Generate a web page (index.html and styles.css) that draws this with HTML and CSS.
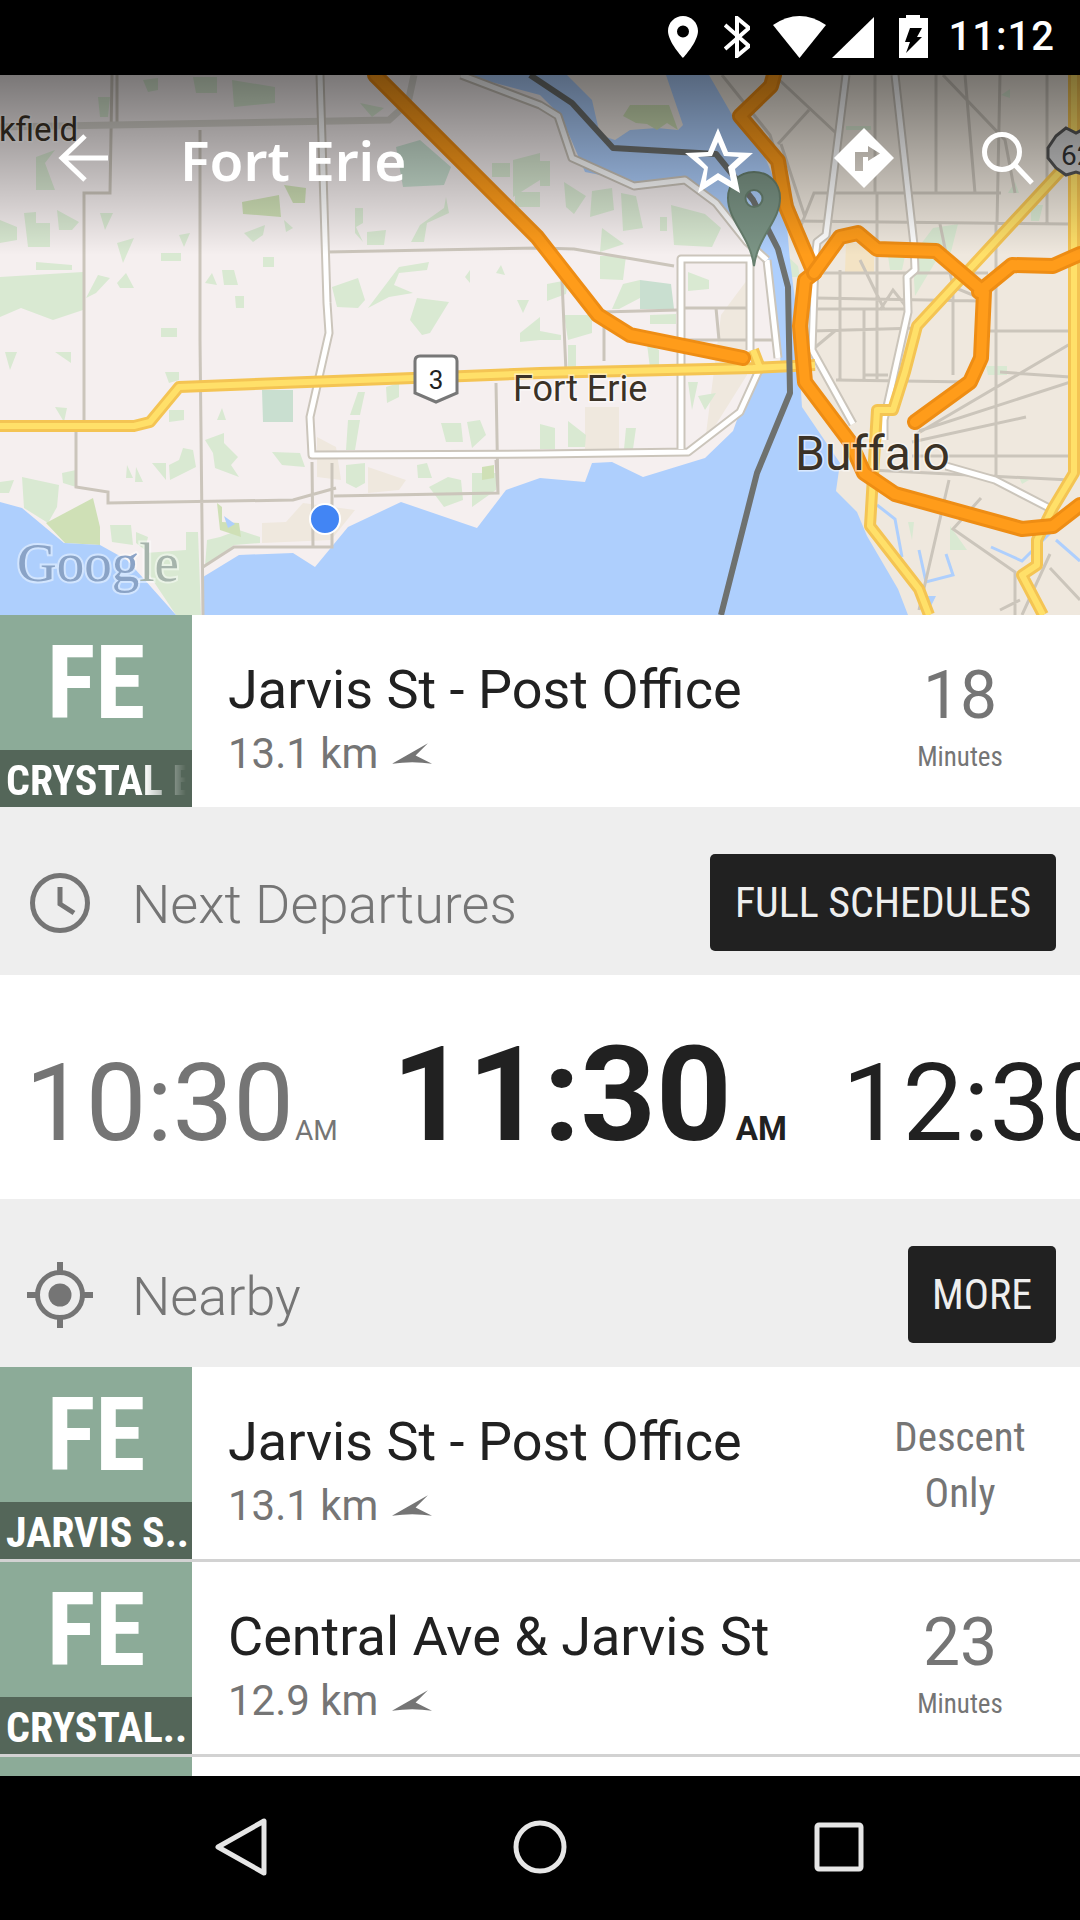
FILE: index.html
```html
<!DOCTYPE html>
<html lang="en">
<head>
<meta charset="utf-8">
<title>Fort Erie</title>
<link rel="stylesheet" href="styles.css">
</head>
<body>
<div class="screen">
  <header class="status">
    <svg class="st-ic ic-pin" viewBox="0 0 30 42"><path class="white" fill-rule="evenodd" d="M15 0C6.7 0 0 6.7 0 15C0 26 15 42 15 42S30 26 30 15C30 6.7 23.3 0 15 0ZM15 9.5a6 6 0 1 1 0 12a6 6 0 1 1 0-12Z"/></svg>
    <svg class="st-ic ic-bt" viewBox="0 0 26 42"><path class="bt" d="M1 9L25 30L13 40V2L25 12L1 33"/></svg>
    <svg class="st-ic ic-wifi" viewBox="0 0 53 42"><path class="white" d="M0 9Q26.5-9 53 9L26.5 42Z"/></svg>
    <svg class="st-ic ic-signal" viewBox="0 0 42 41"><path class="white" d="M0 41L42 0V41Z"/></svg>
    <svg class="st-ic ic-batt" viewBox="0 0 29 43"><path class="white" fill-rule="evenodd" d="M7 0H21V3H29V43H0V3H7ZM11 13L6 27H11L7 38L23 22H18L23 13Z"/></svg>
    <span class="clock-text">11:12</span>
  </header>

  <section class="map">
    <svg class="map-art" viewBox="0 75 1080 540" aria-label="Map of Fort Erie and Buffalo">
      <rect class="land" x="0" y="75" width="1080" height="540"/>
      <path class="beige" d="M709 75H1080V615H780V300Z"/>
      <path class="beige" d="M303 503L355 510L331 540L262 543L262 523L286 522ZM317 437L336 447L341 480L317 477ZM368 467L406 480L399 490L368 493ZM585 407H619V449H585ZM721 315L747 280V375L705 442Z"/>
      <path class="tan" d="M846 242L874 245V272H845Z"/>
      <path class="green" d="M0 220L17 227V240L0 243ZM24 213L36 212V223H50V247H28ZM57 210L79 222L72 230H59ZM0 277L83 272V310L53 320L21 308L0 317ZM36 262L72 265V270H36ZM100 213H113L105 230ZM117 243L134 238L123 263ZM161 253H181V261H161ZM179 235L190 233L184 247ZM244 233L265 225L263 235L253 242ZM263 257H274V267H263ZM284 220L293 228L286 232ZM222 270H234L238 285H224ZM205 283L212 273L217 285ZM235 296H244V308H236ZM161 328H177V337H161ZM117 283L126 273L134 288H120ZM86 298L98 275L110 278L96 293ZM332 287L358 278L365 300L358 308L337 307ZM368 308L399 267L429 262L427 270L399 273L394 285L413 293L389 297ZM410 320L417 298L449 302L430 333L422 335ZM367 232L386 230L384 245H367ZM411 242L420 225L444 208L446 197L449 213L427 223L424 242ZM355 208H363V223L356 227L363 242L355 233ZM143 80L158 78V90L148 92ZM193 77H217V93H196ZM232 80L275 87V103L234 107ZM98 97H110L108 117H100ZM360 103L384 108L372 117ZM36 157L55 150L45 163L55 190H36ZM492 163H510V177H492ZM513 160L540 153V180L513 197ZM515 192H540V207H515ZM517 300H529L523 313ZM520 333L540 317V340L520 342ZM465 277L470 270V283ZM496 273L501 265L505 275Z"/>
      <path class="green" d="M5 352H17L10 370ZM55 352H71V363ZM55 407L67 408L64 422ZM169 410H184V420L169 422ZM165 372H179V380L169 383ZM222 408L226 420H217ZM350 415L358 392H365L360 415ZM386 387L399 383V397L387 403ZM441 423H461L463 442H446ZM467 422L480 420L486 435L472 448ZM348 420H360L355 450H346ZM205 440L224 433V443L238 457L231 465L239 477L215 468L213 453ZM272 452L300 453L305 467L282 465ZM169 465L179 460L183 448L193 450L196 467L170 480ZM152 463H166V480ZM126 478L127 465L133 478ZM136 467L143 482H135ZM62 473L76 470V487L63 483ZM0 482L14 480L9 493H0ZM22 477L59 485L57 507L48 523L24 508ZM110 525H131L133 545L112 542ZM136 532L148 537L145 550L136 543ZM186 532H198L201 615H176L148 573L145 553L186 550ZM207 540L220 537L239 530L260 537V543L234 545L205 567ZM346 465L365 463V483L356 488L346 483ZM417 465L427 463L432 478H418ZM429 487L448 477L461 480L463 500L444 507ZM472 473H496V490L472 507Z"/>
      <path class="green" d="M540 161H550V186H540ZM564 182L586 196L574 214L566 207ZM592 191L612 188L614 210L590 217ZM621 193L636 196L643 228L623 231ZM602 228L624 244L600 252ZM671 205L705 214L721 228L712 247L674 245ZM660 217H667V231H660ZM600 256H626L623 280L600 279ZM612 309L623 284L640 280V298L619 309ZM547 284L568 280L566 294L547 301ZM650 315L676 314V324H650ZM564 315H592V333L568 340ZM540 331L561 335V340H540ZM568 345H576V368H568ZM647 344L659 350V368H650ZM688 272L709 280V289L688 291ZM688 382H698L692 410ZM698 396L716 393L705 410ZM626 428H636L633 449H624ZM568 421L586 435L585 447H568ZM540 424L555 428V449H540ZM915 252L933 228L958 224L951 252L939 256L915 296L914 280ZM783 252L798 266L800 277H788ZM888 256H905L902 270H890ZM846 126H871V130H846ZM986 366H1007V375H988ZM950 526L967 550H950ZM908 522H914L912 540ZM1019 477L1029 480L1022 484ZM1031 205H1043L1039 221H1031ZM1001 95L1010 89V98ZM1008 193L1015 182L1019 193Z"/>
      <path class="green-deep" d="M242 202L279 195L281 217L243 214ZM284 185L306 188L305 203H293ZM46 523L93 498L100 527V545L65 543ZM217 503L222 507V522L239 523L241 537L220 530ZM482 467L494 465V478L482 480Z"/>
      <path class="green-teal" d="M396 147L420 140L451 167L444 185L403 187ZM262 390H293V422H263ZM640 280L671 284L674 309H640Z"/>
      <path class="water" d="M0 502L22 508L64 543L100 545L127 560L176 615H0ZM203 615V577L239 555L293 553L315 567L348 527L401 502L477 528L506 490L540 478L585 482L592 463L612 462L643 477L705 458L733 431L753 375L781 365L774 298L760 252L716 202L685 182L636 182L585 172L561 116L540 95L465 75H709L735 120L762 150L785 205L790 260L795 300L802 407L840 463L836 491L857 512L867 536L898 589L908 615Z"/>
      <path class="land-dark" d="M567 75H666L683 125L678 130L657 128L630 130L615 140L600 135L592 100Z"/>
      <path class="green-deep" d="M623 116L630 105H669L678 130L667 123L657 130L647 124L636 123Z"/>
      <path class="water" d="M919 596H936L929 610ZM224 516L235 524L228 528Z"/>
      <path class="water-line" d="M991 547L1022 561L1050 533M946 554L953 575L926 582L919 550M877 505L895 519L902 557M1056 540L1080 561"/>

      <path class="road" d="M84 422V193H110L112 75M117 75V122M200 130V340L203 615M76 432V487L108 492V503L293 500L336 488M334 496L498 493L496 383M496 460L498 493M312 462L313 547M332 463V547H234L203 567M327 252L540 248L574 249L674 266M562 280L566 372M604 312V361M602 312L678 310M685 308H747M716 308L719 340M685 340H778M850 193H1001M795 221L1070 224M812 273H988M815 298L981 301M815 309H908M812 331L919 328M988 331H1070M864 375H888M836 380L970 382M912 456H1070M1000 372L1070 377M936 75V193M965 75L975 193M875 75V193M1000 75L997 224M1047 75V224M877 193V379M953 287V375M996 224V480M840 270V379M864 309V379M774 75L836 133M809 110L778 144M781 144L805 217M943 75L1005 140L1015 193M919 431L1080 379M915 435L1070 344M912 442L1026 417M812 350L836 330M949 480L919 610M981 498L953 529L1015 572V615M1050 554L1022 615M1050 568L1080 600M870 470L1070 480M800 228L814 193L850 193M722 75L770 135L800 228M940 224L953 287L980 298M884 309L860 260M880 310L893 290L908 309M1000 610L1020 600"/>
      <path class="road-wide" d="M0 127L389 120L408 103L414 75"/>
      <g class="highway">
        <path class="case" d="M320 75L327 303L329 333L310 417L312 455L540 454L688 452L740 412L760 368"/>
        <path class="core" d="M320 75L327 303L329 333L310 417L312 455L540 454L688 452L740 412L760 368"/>
        <path class="case" d="M681 449V259H750V350M767 260L778 358"/>
        <path class="core" d="M681 449V259H750V350M767 260L778 358"/>
        <path class="case" d="M461 75L540 105L558 116L572 158L634 186L685 180L716 203L747 242L767 260"/>
        <path class="core" d="M461 75L540 105L558 116L572 158L634 186L685 180L716 203L747 242L767 260"/>
        <path class="case" d="M846 75L826 235L817 242L815 260L812 350L853 424M895 75L914 245L915 270L907 277L908 312L884 420V440M946 466L995 480L1053 510"/>
        <path class="core" d="M846 75L826 235L817 242L815 260L812 350L853 424M895 75L914 245L915 270L907 277L908 312L884 420V440M946 466L995 480L1053 510"/>
      </g>
      <g class="freeway">
        <path class="case" d="M0 426H134L150 422L179 387L413 378L540 373L753 368L815 365M753 350L760 368"/>
        <path class="core" d="M0 426H134L150 422L179 387L413 378L540 373L753 368L815 365M753 350L760 368"/>
        <path class="case" d="M1080 150L917 326L905 372L893 410H877L870 526L919 589L929 615"/>
        <path class="core" d="M1080 150L917 326L905 372L893 410H877L870 526L919 589L929 615"/>
        <path class="case" d="M1074 75V473L1053 508L1037 540V565L1022 575L1043 615"/>
        <path class="core" d="M1074 75V473L1053 508L1037 540V565L1022 575L1043 615"/>
      </g>
      <path class="rail" d="M530 75L572 103L613 148L716 154L753 200L778 249L788 287L790 393L757 473L721 615"/>
      <g class="expressway">
        <path class="case" d="M375 75L537 237L598 315L630 335L743 358"/>
        <path class="core" d="M375 75L537 237L598 315L630 335L743 358"/>
        <path class="case" d="M774 75L771 86L740 116L778 161L786 207L814 273L805 280L800 326L805 382L850 442L864 473L895 494L1022 529L1053 526L1080 505"/>
        <path class="core" d="M774 75L771 86L740 116L778 161L786 207L814 273L805 280L800 326L805 382L850 442L864 473L895 494L1022 529L1053 526L1080 505"/>
        <path class="case" d="M814 273L840 237L858 233L877 249L936 251L984 292L981 358L970 382L915 422M979 292L1012 265L1053 266L1080 254"/>
        <path class="core" d="M814 273L840 237L858 233L877 249L936 251L984 292L981 358L970 382L915 422M979 292L1012 265L1053 266L1080 254"/>
      </g>

      <path class="pin" fill-rule="evenodd" d="M754 172C739 172 728 183 728 198C728 221 750 236 754 266C758 236 780 221 780 198C780 183 769 172 754 172ZM754 190a8.5 8.5 0 1 1 0 17a8.5 8.5 0 1 1 0-17Z"/>
      <g class="shield">
        <path d="M420 356H452Q457 356 457 361V393L436 402L415 393V361Q415 356 420 356Z"/>
        <text class="shield-num" x="436" y="389">3</text>
      </g>
      <g class="shield-us">
        <path d="M1056 136L1066 128L1076 133L1086 128V175L1076 172L1066 175L1056 168L1048 158V148Z"/>
        <text class="shield-num-us" x="1061" y="165">62</text>
      </g>
      <circle class="dot" cx="325" cy="519" r="15"/>
      <text class="label-kf" x="-1" y="141">kfield</text>
      <text class="label-fe" x="513" y="401">Fort Erie</text>
      <text class="label-bu" x="795" y="470">Buffalo</text>
      <text class="google" x="17" y="581"><tspan class="g-a">Goog</tspan><tspan class="g-b">le</tspan></text>
    </svg>
    <div class="map-shade"></div>
    <div class="toolbar">
      <svg class="tb-ic tb-back" viewBox="0 0 50 48"><path class="tb-line" d="M50 24H4M27 2L4 24L27 46"/></svg>
      <h1 class="title">Fort Erie</h1>
      <svg class="tb-ic tb-star" viewBox="0 0 68 65"><path class="white" fill-rule="evenodd" d="M33 0L43 24L68 25L50 41L55 65L33 52L13 65L19 41L0 25L23 24ZM33 14L27 28L13 29L23 39L21 53L33 45L46 53L43 39L54 29L39 28Z"/></svg>
      <svg class="tb-ic tb-turn" viewBox="0 0 60 60"><path class="white" fill-rule="evenodd" d="M30 0L60 30L30 60L0 30ZM21 43V24H34V18L46 25.5L34 33V29H29V43Z"/></svg>
      <svg class="tb-ic tb-search" viewBox="0 0 52 53"><circle class="tb-line" cx="20" cy="20" r="17.500"/><path class="tb-line" d="M33 33L50 51"/></svg>
    </div>
  </section>

  <article class="stop">
    <div class="badge"><span class="code">FE</span><span class="line"><span class="line-text fade">CRYSTAL BEACH</span></span></div>
    <div class="info"><div class="name">Jarvis St - Post Office</div><div class="dist">13.1 km<svg class="bearing" viewBox="0 0 39 21"><path d="M0 20L35 0L23 12L39 20Q20 17 0 20Z"/></svg></div></div>
    <div class="eta"><div class="eta-num">18</div><div class="eta-unit">Minutes</div></div>
  </article>

  <section class="section">
    <svg class="sec-ic" viewBox="0 0 66 66"><circle class="sec-line" cx="33" cy="33" r="27.500"/><path class="sec-line" d="M33 17V34L47 43"/></svg>
    <h2 class="sec-title">Next Departures</h2>
    <button class="btn">FULL SCHEDULES</button>
  </section>

  <section class="times">
    <div class="time time-past"><span class="t-main">10:30</span><span class="t-ap">AM</span></div>
    <div class="time time-next"><span class="t-main">11:30</span><span class="t-ap">AM</span></div>
    <div class="time time-later"><span class="t-main">12:30</span></div>
  </section>

  <section class="section">
    <svg class="sec-ic" viewBox="0 0 66 66"><circle class="sec-line" cx="33" cy="33" r="22.500"/><circle class="sec-fill" cx="33" cy="33" r="11.500"/><path class="sec-tick" d="M33 0V10M33 56V66M0 33H10M56 33H66"/></svg>
    <h2 class="sec-title">Nearby</h2>
    <button class="btn btn-more">MORE</button>
  </section>

  <div class="list">
    <article class="stop stop-item">
      <div class="badge"><span class="code">FE</span><span class="line"><span class="line-text">JARVIS S..</span></span></div>
      <div class="info"><div class="name">Jarvis St - Post Office</div><div class="dist">13.1 km<svg class="bearing" viewBox="0 0 39 21"><path d="M0 20L35 0L23 12L39 20Q20 17 0 20Z"/></svg></div></div>
      <div class="eta"><div class="eta-note">Descent<br>Only</div></div>
    </article>
    <article class="stop stop-item">
      <div class="badge"><span class="code">FE</span><span class="line"><span class="line-text">CRYSTAL..</span></span></div>
      <div class="info"><div class="name">Central Ave &amp; Jarvis St</div><div class="dist">12.9 km<svg class="bearing" viewBox="0 0 39 21"><path d="M0 20L35 0L23 12L39 20Q20 17 0 20Z"/></svg></div></div>
      <div class="eta"><div class="eta-num">23</div><div class="eta-unit">Minutes</div></div>
    </article>
    <article class="stop stop-item">
      <div class="badge"></div>
    </article>
  </div>

  <nav class="navbar">
    <svg class="nav-ic" viewBox="0 0 54 60"><path class="nav-line" d="M50 4V56L4 30Z"/></svg>
    <svg class="nav-ic" viewBox="0 0 54 60"><circle class="nav-line" cx="27" cy="30" r="24"/></svg>
    <svg class="nav-ic" viewBox="0 0 54 60"><rect class="nav-line" x="5" y="8" width="44" height="44" rx="2"/></svg>
  </nav>
</div>
</body>
</html>
```
FILE: styles.css
```css
* { box-sizing: border-box; }
html, body { margin: 0; padding: 0; }
body { background: #000; font-family: Roboto, "Liberation Sans", sans-serif; }
.screen { width: 1080px; height: 1920px; display: flex; flex-direction: column; overflow: hidden; background: #eee; }
.white { fill: #fff; }

/* status bar */
.status { height: 75px; flex: none; background: #000; display: flex; align-items: flex-start; padding: 16px 25px 0 0; justify-content: flex-end; }
.st-ic { display: block; flex: none; }
.ic-pin { width: 30px; height: 42px; margin-right: 26px; }
.ic-bt { width: 26px; height: 42px; margin-right: 23px; }
.ic-wifi { width: 53px; height: 42px; margin-right: 6px; }
.ic-signal { width: 42px; height: 41px; margin-right: 25px; margin-top: 1px; }
.ic-batt { width: 29px; height: 43px; margin-right: 21px; margin-top: -1px; }
.bt { fill: none; stroke: #fff; stroke-width: 4; }
.clock-text { color: #fff; font-size: 40px; line-height: 42px; font-weight: 500; letter-spacing: 1px; }

/* map */
.map { position: relative; height: 540px; flex: none; overflow: hidden; background: #f4eeee; }
.map-art { display: block; width: 1080px; height: 540px; }
.land { fill: #f5efef; }
.land-dark { fill: #efe9e4; }
.beige { fill: #efe8de; }
.tan { fill: #f3e3c4; }
.green { fill: #d9e9d2; }
.green-deep { fill: #cfe0b6; }
.green-teal { fill: #c9dfd0; }
.water { fill: #aecffd; }
.water-line { fill: none; stroke: #aecffd; stroke-width: 3; }
.road { fill: none; stroke: #cbc5bb; stroke-width: 3; }
.road-wide { fill: none; stroke: #d8d5ce; stroke-width: 7; }
.case, .core { fill: none; stroke-linejoin: round; }
.highway .case { stroke: #cbc5bb; stroke-width: 9; }
.highway .core { stroke: #fff; stroke-width: 5; }
.freeway .case { stroke: #f4c453; stroke-width: 12; }
.freeway .core { stroke: #ffe069; stroke-width: 6; }
.expressway .case { stroke: #ee8d14; stroke-width: 16; stroke-linecap: round; }
.expressway .core { stroke: #ff9c1a; stroke-width: 10; stroke-linecap: round; }
.rail { fill: none; stroke: #6e716f; stroke-width: 6; stroke-linejoin: round; }
.pin { fill: #7c9586; stroke: #68806f; stroke-width: 2; }
.shield path { fill: #fff; stroke: #777; stroke-width: 3; }
.shield-num { font-size: 26px; fill: #222; text-anchor: middle; }
.shield-us path { fill: #cfcfcf; stroke: #555; stroke-width: 3; }
.shield-num-us { font-size: 28px; fill: #333; }
.dot { fill: #4285f4; stroke: #fff; stroke-width: 2; }
.label-kf, .label-fe, .label-bu { fill: #3b3226; paint-order: stroke; stroke: rgba(255,255,255,.55); stroke-width: 3px; }
.label-kf { font-size: 33px; }
.label-fe { font-size: 36px; }
.label-bu { font-size: 48px; }
.google { font-family: "Liberation Serif", serif; font-size: 55px; paint-order: stroke; stroke: rgba(255,255,255,.45); stroke-width: 4px; }
.g-a { fill: #8aa3c6; }
.g-b { fill: #a6b4ac; }
.map-shade { position: absolute; left: 0; top: 0; right: 0; height: 180px; background: linear-gradient(to bottom, rgba(0,0,0,.5), rgba(0,0,0,0)); }
.toolbar { position: absolute; left: 0; top: 0; right: 0; height: 166px; display: flex; align-items: center; }
.tb-ic { display: block; flex: none; }
.tb-back { width: 50px; height: 48px; margin-left: 58px; }
.tb-line { fill: none; stroke: #fff; stroke-width: 5; }
.title { margin: 3px 0 0 72px; flex: 1; color: #fff; font-size: 55px; font-weight: 600; font-family: "Noto Sans", Roboto, sans-serif; line-height: 70px; }
.tb-star { width: 68px; height: 65px; margin-right: 81px; margin-top: 4px; }
.tb-turn { width: 60px; height: 60px; margin-right: 88px; }
.tb-search { width: 52px; height: 53px; margin-right: 46px; }

/* stops */
.stop { height: 192px; flex: none; display: flex; background: #fff; }
.stop-item { height: 195px; border-bottom: 3px solid #d2d2d2; }
.badge { width: 192px; flex: none; display: flex; flex-direction: column; background: #8cab98; }
.code { flex: 1; display: flex; align-items: center; justify-content: center; color: #fff; font-size: 102px; font-weight: 700; font-stretch: condensed; line-height: 1; }
.line { height: 57px; flex: none; background: #546659; color: #fff; font-size: 42px; font-weight: 700; font-stretch: condensed; line-height: 61px; padding-left: 6px; white-space: nowrap; overflow: hidden; }
.line-text { display: block; }
.fade { -webkit-mask-image: linear-gradient(to right, #000 138px, transparent 180px); mask-image: linear-gradient(to right, #000 138px, transparent 180px); }
.info { flex: 1; padding: 44px 0 0 36px; }
.name { color: #212121; font-size: 54px; line-height: 62px; }
.dist { color: #757575; font-size: 42px; line-height: 48px; margin-top: 9px; display: flex; align-items: center; }
.bearing { width: 40px; height: 22px; margin-left: 14px; fill: #757575; flex: none; }
.eta { width: 192px; margin-right: 24px; flex: none; display: flex; flex-direction: column; align-items: center; color: #757575; }
.eta-num { font-size: 66px; line-height: 70px; margin-top: 46px; }
.eta-unit { font-size: 27px; line-height: 32px; margin-top: 10px; font-stretch: condensed; }
.eta-note { font-size: 41px; line-height: 56px; text-align: center; font-stretch: condensed; margin-top: 42px; }

/* section headers */
.section { height: 168px; flex: none; display: flex; align-items: center; padding: 47px 24px 24px 27px; background: #eee; }
.sec-ic { width: 66px; height: 66px; flex: none; }
.sec-line { fill: none; stroke: #757575; stroke-width: 5; }
.sec-fill { fill: #757575; }
.sec-tick { fill: none; stroke: #757575; stroke-width: 6; }
.sec-title { flex: 1; margin: 4px 0 0 39px; color: #757575; font-size: 54px; font-weight: 300; line-height: 62px; }
.btn { height: 97px; flex: none; padding: 0 25px; border: 0; border-radius: 5px; background: #212121; color: #eee; font-family: Roboto, sans-serif; font-size: 42px; font-stretch: condensed; }
.btn-more { width: 148px; padding: 0; }

/* departures */
.times { height: 224px; flex: none; display: flex; align-items: baseline; padding-left: 25px; padding-top: 20px; background: #fff; overflow: hidden; white-space: nowrap; line-height: 200px; }
.time { flex: none; display: flex; align-items: baseline; color: #212121; }
.t-main { font-size: 108px; }
.t-ap { font-size: 28px; margin-left: 1px; }
.time-past { color: #757575; }
.time-next { margin-left: 54px; font-weight: 700; }
.time-next .t-main { font-size: 132px; }
.time-next .t-ap { font-size: 33px; margin-left: 4px; }
.time-later { margin-left: 55px; }

/* list + nav */
.list { flex: 1; min-height: 0; overflow: hidden; background: #fff; }
.navbar { height: 144px; flex: none; background: #000; display: flex; justify-content: center; align-items: center; gap: 245px; padding-bottom: 2px; }
.nav-ic { width: 54px; height: 60px; flex: none; }
.nav-line { fill: none; stroke: #e6e6e6; stroke-width: 5; stroke-linejoin: round; }
```
